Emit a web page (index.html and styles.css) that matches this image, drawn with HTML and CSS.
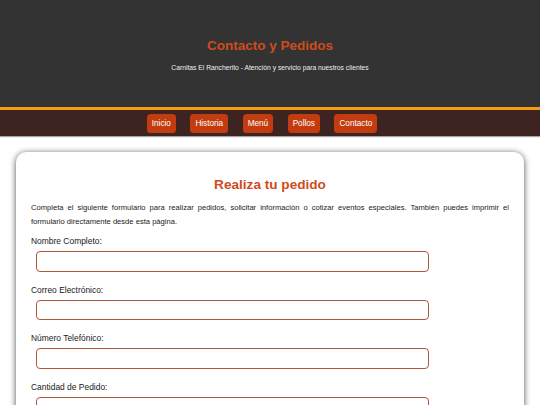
FILE: index.html
```html
<!DOCTYPE html>
<html lang="es">
<head>
<meta charset="utf-8">
<title>Contacto y Pedidos</title>
<link rel="stylesheet" href="styles.css">
</head>
<body>
<header class="site-header">
  <h1 class="site-title">Contacto y Pedidos</h1>
  <p class="site-subtitle">Carnitas El Rancherito - Atención y servicio para nuestros clientes</p>
</header>
<nav class="site-nav">
  <a class="nav-btn" href="#">Inicio</a>
  <a class="nav-btn" href="#">Historia</a>
  <a class="nav-btn" href="#">Menú</a>
  <a class="nav-btn" href="#">Pollos</a>
  <a class="nav-btn" href="#">Contacto</a>
</nav>
<main class="card">
  <h2 class="card-title">Realiza tu pedido</h2>
  <p class="card-intro">Completa el siguiente formulario para realizar pedidos, solicitar información o cotizar eventos especiales. También puedes imprimir el formulario directamente desde esta página.</p>
  <form class="order-form">
    <div class="field">
      <label class="field-label" for="nombre">Nombre Completo:</label>
      <input class="field-input" id="nombre" type="text">
    </div>
    <div class="field">
      <label class="field-label" for="correo">Correo Electrónico:</label>
      <input class="field-input" id="correo" type="email">
    </div>
    <div class="field">
      <label class="field-label" for="tel">Número Telefónico:</label>
      <input class="field-input" id="tel" type="tel">
    </div>
    <div class="field">
      <label class="field-label" for="cantidad">Cantidad de Pedido:</label>
      <input class="field-input" id="cantidad" type="text">
    </div>
  </form>
</main>
</body>
</html>
```
FILE: styles.css
```css
* { box-sizing: border-box; }
html, body { margin: 0; padding: 0; background: #ffffff; }
body {
  font-family: "Liberation Sans", Arial, sans-serif;
  color: #222222;
}
.site-header {
  background: #333333;
  height: 110px;
  border-bottom: 3px solid #f39c12;
  padding-top: 38px;
  text-align: center;
}
.site-title {
  margin: 0;
  font-size: 13.5px;
  line-height: 16px;
  font-weight: bold;
  color: #d04b1c;
}
.site-subtitle {
  margin: 8.5px 0 0;
  font-size: 6.75px;
  line-height: 9px;
  color: #eeeeee;
}
.site-nav {
  background: #3e2421;
  height: 26px;
  display: flex;
  justify-content: center;
  align-items: center;
  gap: 14.5px;
  padding-right: 16px;
  box-shadow: 0 1px 1px rgba(0,0,0,0.35);
}
.nav-btn {
  display: block;
  background: #c23c10;
  color: #ffffff;
  text-decoration: none;
  font-size: 8.2px;
  line-height: 9px;
  padding: 5px 5px;
  border-radius: 3.5px;
}
.card {
  display: block;
  margin: 16px 16px 0;
  background: #ffffff;
  border-radius: 10px;
  box-shadow: 0 1px 6px rgba(0,0,0,0.7);
  padding: 25px 15px 20px;
}
.card-title {
  margin: 0 0 8px;
  text-align: center;
  font-size: 13.6px;
  line-height: 16px;
  font-weight: bold;
  color: #d04b1c;
}
.card-intro {
  margin: 0 0 7px;
  font-size: 7.6px;
  line-height: 14px;
  text-align: justify;
  color: #1a1a1a;
}
.order-form { display: flex; flex-direction: column; gap: 13px; }
.field { display: flex; flex-direction: column; gap: 5px; }
.field-label {
  font-size: 8.45px;
  line-height: 10px;
  color: #1a1a1a;
}
.field-input {
  display: block;
  width: 82.2%;
  height: 20.7px;
  margin-left: 5px;
  padding: 4px;
  border: 1px solid #b0583a;
  border-radius: 4px;
  background: #ffffff;
  font-family: inherit;
  font-size: 8px;
}
```
